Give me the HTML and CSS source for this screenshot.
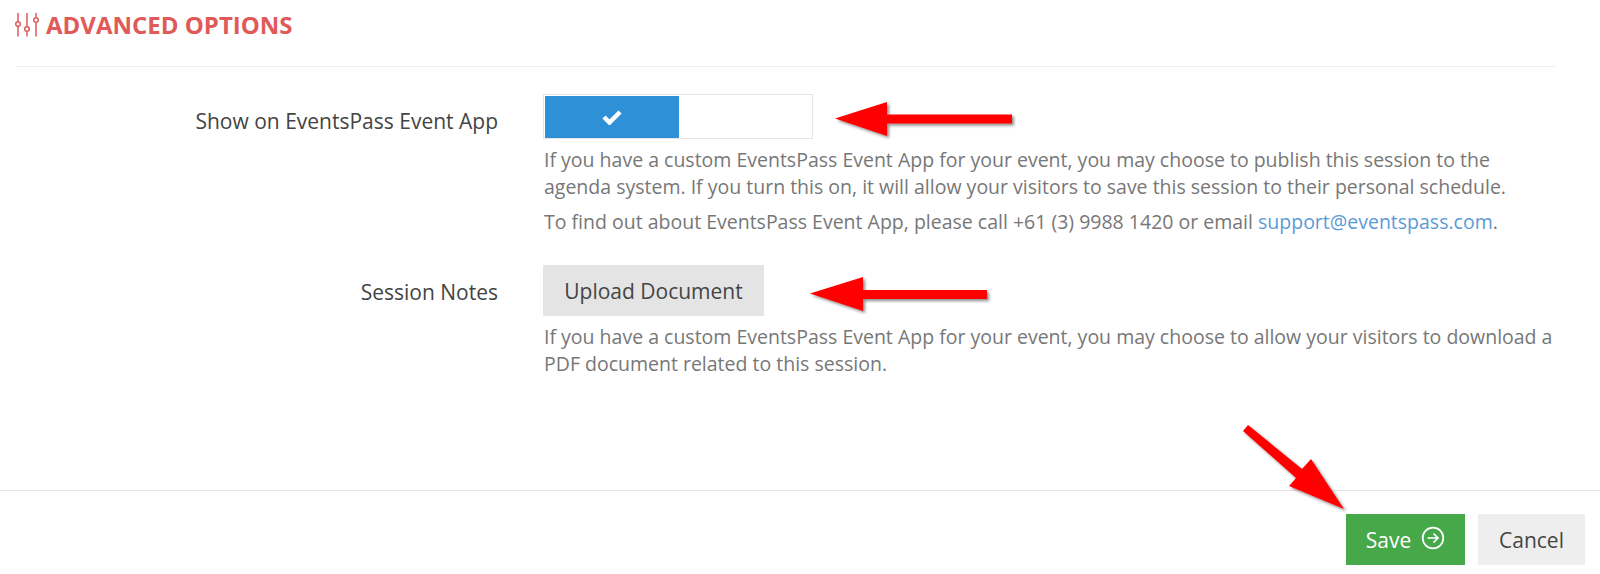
FILE: index.html
```html
<!DOCTYPE html>
<html lang="en">
  <head>
    <meta charset="UTF-8" />
    <title>Advanced Options</title>
    <link rel="stylesheet" href="styles.css">
  </head>

  <body>
    <section class="panel">
      <h2 class="panel-title">
        <svg class="title-icon" width="24" height="24" viewBox="0 0 24 24" fill="none" stroke="#e05a5a" stroke-width="1.500">
          <path d="M3 0v8.500M3 13.500v10M12 0v13.500M12 18.500v5M21 0v4.500M21 9.500v14" />
          <circle cx="3" cy="11" r="2.300" />
          <circle cx="12" cy="16" r="2.300" />
          <circle cx="21" cy="7" r="2.300" />
        </svg>
        ADVANCED OPTIONS
      </h2>

      <div class="row row-app">
        <label class="row-label">Show on EventsPass Event App</label>
        <div class="row-field">
          <div class="toggle">
            <div class="toggle-on">
              <svg width="20" height="16" viewBox="0 0 20 16" fill="none" stroke="#fff" stroke-width="4.500">
                <path d="M2 8l5.500 5.500L18 3" />
              </svg>
            </div>
          </div>
          <p class="help">If you have a custom EventsPass Event App for your event, you may choose to publish this session to the agenda system. If you turn this on, it will allow your visitors to save this session to their personal schedule.</p>
          <p class="help help-last">To find out about EventsPass Event App, please call +61 (3) 9988 1420 or email <a href="#">support@eventspass.com</a>.</p>
        </div>
      </div>

      <div class="row row-notes">
        <label class="row-label">Session Notes</label>
        <div class="row-field">
          <button class="btn btn-upload">Upload Document</button>
          <p class="help">If you have a custom EventsPass Event App for your event, you may choose to allow your visitors to download a PDF document related to this session.</p>
        </div>
      </div>
    </section>

    <footer class="actions">
      <button class="btn btn-save">
        Save
        <svg class="save-icon" width="24" height="24" viewBox="0 0 24 24" fill="none" stroke="#fff" stroke-width="1.700">
          <circle cx="12" cy="12" r="10.300" />
          <path d="M6.500 12h10M12.500 7.500l4.500 4.500-4.500 4.500" />
        </svg>
      </button>
      <button class="btn btn-cancel">Cancel</button>
    </footer>

    <!-- red arrows drawn over the page -->
    <svg class="arrows" width="1600" height="574" viewBox="0 0 1600 574">
      <defs>
        <filter id="arrowShadow" x="-10%" y="-20%" width="120%" height="140%">
          <feDropShadow dx="2" dy="2" stdDeviation="1.500" flood-color="#000" flood-opacity="0.45" />
        </filter>
      </defs>
      <g fill="#ff0000" filter="url(#arrowShadow)">
        <path d="M835 118.500L887 102V114.500H1012V123.500H887V136Z" />
        <path d="M810 293.500L863 277V290H987V299H863V311Z" />
        <path d="M1344 509L1289 486L1296 478L1243 431L1248 425L1302 469L1311 459Z" />
      </g>
    </svg>
  </body>
</html>
```

FILE: styles.css
```css
* {
  box-sizing: border-box;
}
body {
  margin: 0;
  height: 574px;
  overflow: hidden;
  position: relative;
  background-color: white;
  font-family: "Open Sans", sans-serif;
  color: #444;
}
.panel {
  margin: 0 45px 0 16px;
  height: 490px;
}
.panel-title {
  margin: 0;
  height: 67px;
  padding-top: 9px;
  border-bottom: 1px solid #eeeeee;
  display: flex;
  align-items: flex-start;
  gap: 7px;
  color: #e05a5a;
  font-size: 24px;
  line-height: 32px;
  font-weight: 700;
}
.title-icon {
  margin-top: 4px;
  margin-left: -1px;
}
.row {
  display: flex;
}
.row-app {
  margin-top: 27px;
}
.row-notes {
  margin-top: 30px;
}
.row-label {
  width: 482px;
  text-align: right;
  font-size: 21px;
  line-height: 28px;
  flex-shrink: 0;
}
.row-app .row-label {
  padding-top: 13px;
}
.row-notes .row-label {
  padding-top: 13px;
}
.row-field {
  margin-left: 45px;
  flex: 1;
}
.toggle {
  width: 270px;
  height: 45px;
  border: 1px solid #e5e5e5;
  padding: 1px;
}
.toggle-on {
  width: 134px;
  height: 42px;
  background-color: #2e90d6;
  display: flex;
  align-items: center;
  justify-content: center;
}
.help {
  margin: 0 0 0 1px;
  color: #777;
  font-size: 19.500px;
  line-height: 27px;
  padding-top: 7px;
}
.help-last {
  padding-top: 8px;
}
.help a {
  color: #5b9bd5;
  text-decoration: none;
}
.btn {
  border: 0;
  height: 51px;
  font-family: "Open Sans", sans-serif;
  font-size: 21px;
}
.btn-upload {
  width: 221px;
  background-color: #e4e4e4;
  color: #444;
  display: block;
}
.actions {
  border-top: 1px solid #e5e5e5;
  height: 84px;
  padding: 23px 15px 0 0;
  display: flex;
  justify-content: flex-end;
  gap: 13px;
}
.btn-save {
  width: 119px;
  background-color: #47a84a;
  color: white;
  display: flex;
  align-items: center;
  justify-content: center;
  gap: 10px;
}
.save-icon {
  margin-top: -3px;
}
.btn-cancel {
  width: 107px;
  background-color: #eeeeee;
  color: #444;
}
.arrows {
  position: absolute;
  top: 0;
  left: 0;
  pointer-events: none;
}
```
